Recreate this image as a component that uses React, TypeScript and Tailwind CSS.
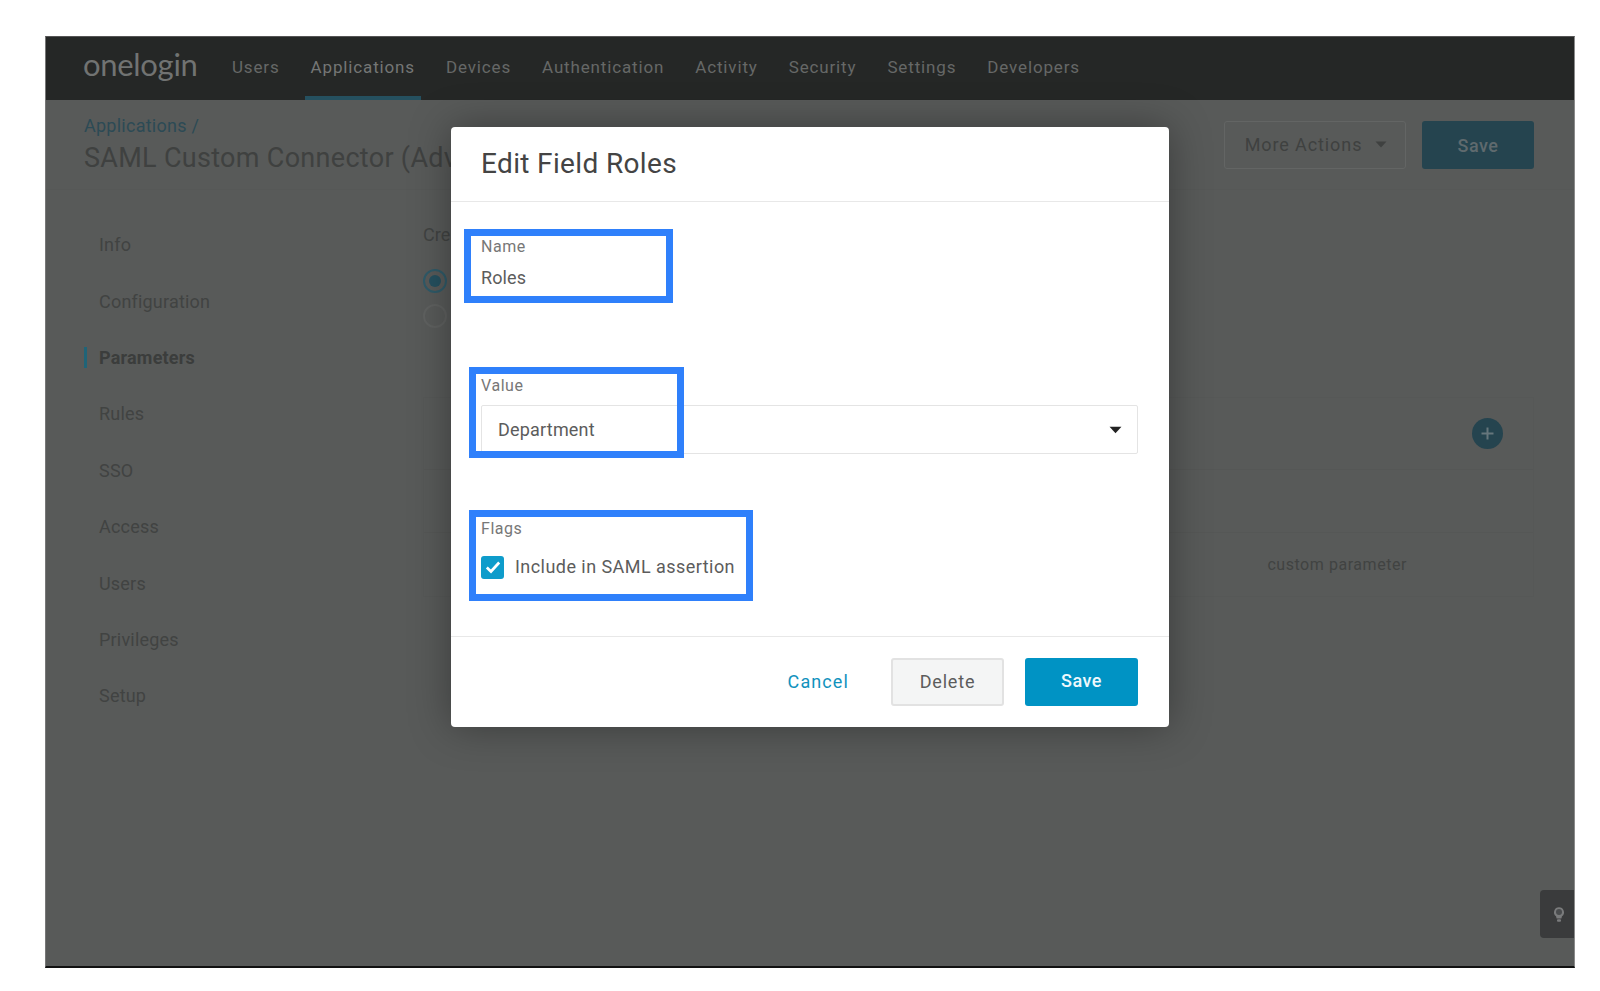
import React from "react";

const navItems = ["Users", "Applications", "Devices", "Authentication", "Activity", "Security", "Settings", "Developers"];
const sideItems = ["Info", "Configuration", "Parameters", "Rules", "SSO", "Access", "Users", "Privileges", "Setup"];

const Caret = ({ className }: { className: string }) => (
  <svg viewBox="0 0 12 7" className={className} fill="currentColor">
    <path d="M0.5 0.5h11L6 6.5z" />
  </svg>
);

const Highlight = ({ className }: { className: string }) => (
  <div className={`absolute border-[7px] border-[#2f80fb] pointer-events-none ${className}`} />
);

const Modal = () => (
  <div className="absolute left-[405px] top-[90px] w-[718px] h-[600px] flex flex-col bg-white rounded-[4px] shadow-[0_0_40px_rgba(0,0,0,0.35)] text-[#5c5c5c]">
    <div className="h-[75px] shrink-0 flex items-center px-[30px] border-b border-[#e8e8e8]">
      <h2 className="text-[28px] leading-8 tracking-[0.35px] text-[#444]">Edit Field Roles</h2>
    </div>

    <div className="flex-1 flex flex-col pl-[30px] pr-[31px]">
      <label className="mt-[35px] text-[16px] leading-5 tracking-[0.55px] text-[#777]">Name</label>
      <div className="mt-[9px] text-[18px] leading-6 tracking-[0.1px]">Roles</div>

      <label className="mt-[86px] text-[16px] leading-5 tracking-[0.55px] text-[#777]">Value</label>
      <div className="mt-[9px] h-[49px] flex items-center justify-between pl-[16px] pr-[15px] border border-[#e4e4e4] rounded-[2px] text-[18px]">
        <span className="tracking-[0.2px]">Department</span>
        <Caret className="w-[13px] h-[8px] text-[#222]" />
      </div>

      <label className="mt-[65px] text-[16px] leading-5 tracking-[0.55px] text-[#777]">Flags</label>
      <div className="mt-[16px] flex items-center gap-[11px]">
        <span className="w-[23px] h-[23px] flex items-center justify-center rounded-[3px] bg-[#0e9ccb]">
          <svg viewBox="0 0 16 16" className="w-[18px] h-[18px]" fill="none" stroke="white" strokeWidth="2.4">
            <path d="M2.5 8.5l3.7 3.5 7.3-8" />
          </svg>
        </span>
        <span className="text-[18px] leading-6 tracking-[0.45px]">Include in SAML assertion</span>
      </div>
    </div>

    <div className="h-[91px] shrink-0 flex items-start justify-end gap-[21px] pt-[21px] pr-[31px] border-t border-[#e8e8e8]">
      <button className="h-[48px] mr-[21px] pb-[2px] text-[18px] tracking-[1.1px] text-[#1192bd]">Cancel</button>
      <button className="w-[113px] h-[48px] rounded-[3px] border-2 border-[#e2e2e2] bg-[#f4f5f5] pb-[2px] text-[18px] tracking-[0.8px] text-[#5c5c5c]">Delete</button>
      <button className="w-[113px] h-[48px] rounded-[3px] bg-[#0093c4] text-[18px] font-medium tracking-[0.5px] text-[#eef8fc] pb-[3px]">Save</button>
    </div>

    <Highlight className="left-[13px] top-[102px] w-[209px] h-[74px]" />
    <Highlight className="left-[18px] top-[240px] w-[215px] h-[91px]" />
    <Highlight className="left-[18px] top-[383px] w-[284px] h-[91px]" />
  </div>
);

export default function App() {
  return (
    <div className="w-[1600px] h-[991px] overflow-hidden bg-white pt-[36px] pl-[45px] pr-[25px] pb-[23px] font-['Roboto',sans-serif]">
      <div className="relative h-full flex flex-col overflow-hidden bg-[#585a59] border-t border-[#555] border-r border-r-[#8a8a8a] border-b-2 border-b-[#111] border-l border-l-[#777]">
        {/* top nav */}
        <nav className="h-[63px] shrink-0 flex items-stretch pl-[37px] bg-[#252726] text-[17px] tracking-[0.85px] text-[#666867]">
          <span className="self-center w-[143px] font-['Lato',sans-serif] text-[31px] leading-none tracking-[-0.3px] text-[#717372] pb-[8px]">onelogin</span>
          <div className="flex gap-[19px]">
            {navItems.map((item) => (
              <span
                key={item}
                className={
                  item === "Applications"
                    ? "flex items-center px-[6px] border-b-4 border-[#25505f] pt-[3px] text-[#747675]"
                    : "flex items-center px-[6px] pb-[1px]"
                }
              >
                {item}
              </span>
            ))}
          </div>
        </nav>

        {/* page header */}
        <header className="h-[90px] shrink-0 flex justify-between pl-[38px] pr-[40px] border-b border-[#565857] text-[#3f4140]">
          <div className="pt-[15px]">
            <div className="text-[18px] leading-[22px] tracking-[0.25px] text-[#2c4a55]">Applications /</div>
            <h1 className="mt-[5px] text-[27px] leading-[32px] tracking-[0.3px]">SAML Custom Connector (Advanced)</h1>
          </div>
          <div className="flex items-start gap-[16px] pt-[21px]">
            <button className="w-[182px] h-[48px] flex items-center justify-center gap-[13px] pl-[2px] rounded-[3px] border border-[#636564] pb-[1px] text-[18px] tracking-[0.9px]">
              More Actions
              <Caret className="w-[12px] h-[7px] text-[#3f4140]" />
            </button>
            <button className="w-[112px] h-[48px] rounded-[3px] bg-[#25444f] text-[18px] font-medium tracking-[0.5px] text-[#5f6a6e]">Save</button>
          </div>
        </header>

        {/* body */}
        <div className="flex-1 flex">
          <aside className="w-[377px] shrink-0 pl-[38px] pt-[26.5px]">
            {sideItems.map((item) => (
              <div
                key={item}
                className={
                  item === "Parameters"
                    ? "h-[56.4px] flex items-center font-bold text-[18px] tracking-[0.2px] text-[#3b3d3c]"
                    : "h-[56.4px] flex items-center text-[18px] tracking-[0.2px] text-[#414342]"
                }
              >
                <span className={item === "Parameters" ? "w-[3px] h-[21px] mr-[12px] bg-[#1f6478]" : "w-[15px]"} />
                {item}
              </div>
            ))}
          </aside>

          <main className="flex-1 pr-[40px] text-[#414342]">
            <div className="pt-[34px] text-[18px] leading-[22px]">Create</div>
            <div className="mt-[23px] flex flex-col gap-[11px]">
              <span className="w-[24px] h-[24px] flex items-center justify-center rounded-full border-2 border-[#2f5a68]">
                <span className="w-[12px] h-[12px] rounded-full bg-[#25505f]" />
              </span>
              <span className="w-[24px] h-[24px] rounded-full border-2 border-[#5f6160]" />
            </div>

            <div className="mt-[69px] border border-[#565857]">
              <div className="h-[72px] flex items-center justify-end pr-[30px] border-b border-[#555756]">
                <span className="w-[31px] h-[31px] flex items-center justify-center rounded-full bg-[#25444f]">
                  <svg viewBox="0 0 15 15" className="w-[15px] h-[15px]" stroke="#66767c" strokeWidth="2">
                    <path d="M7.5 1.500v12M1.500 7.500h12" />
                  </svg>
                </span>
              </div>
              <div className="h-[63px] border-b border-[#555756]" />
              <div className="h-[63px] flex items-center justify-end pr-[126px] text-[16px] tracking-[0.55px]">custom parameter</div>
            </div>
          </main>
        </div>

        <Modal />

        {/* help tab */}
        <div className="absolute right-0 top-[853px] w-[34px] h-[48px] flex items-center justify-center pl-[3px] rounded-l-[4px] bg-[#3a3b3c]">
          <svg viewBox="0 0 12 16" className="w-[12px] h-[17px]">
            <path d="M6 .8a5 5 0 0 1 3 9l-.6 2.200H3.600L3 9.800A5 5 0 0 1 6 .8z" fill="#7a7b7c" />
            <circle cx="6" cy="5.400" r="3" fill="#4a4c4e" />
            <rect x="4" y="12.800" width="4" height="2.400" rx="1" fill="#7a7b7c" />
          </svg>
        </div>
      </div>
    </div>
  );
}
